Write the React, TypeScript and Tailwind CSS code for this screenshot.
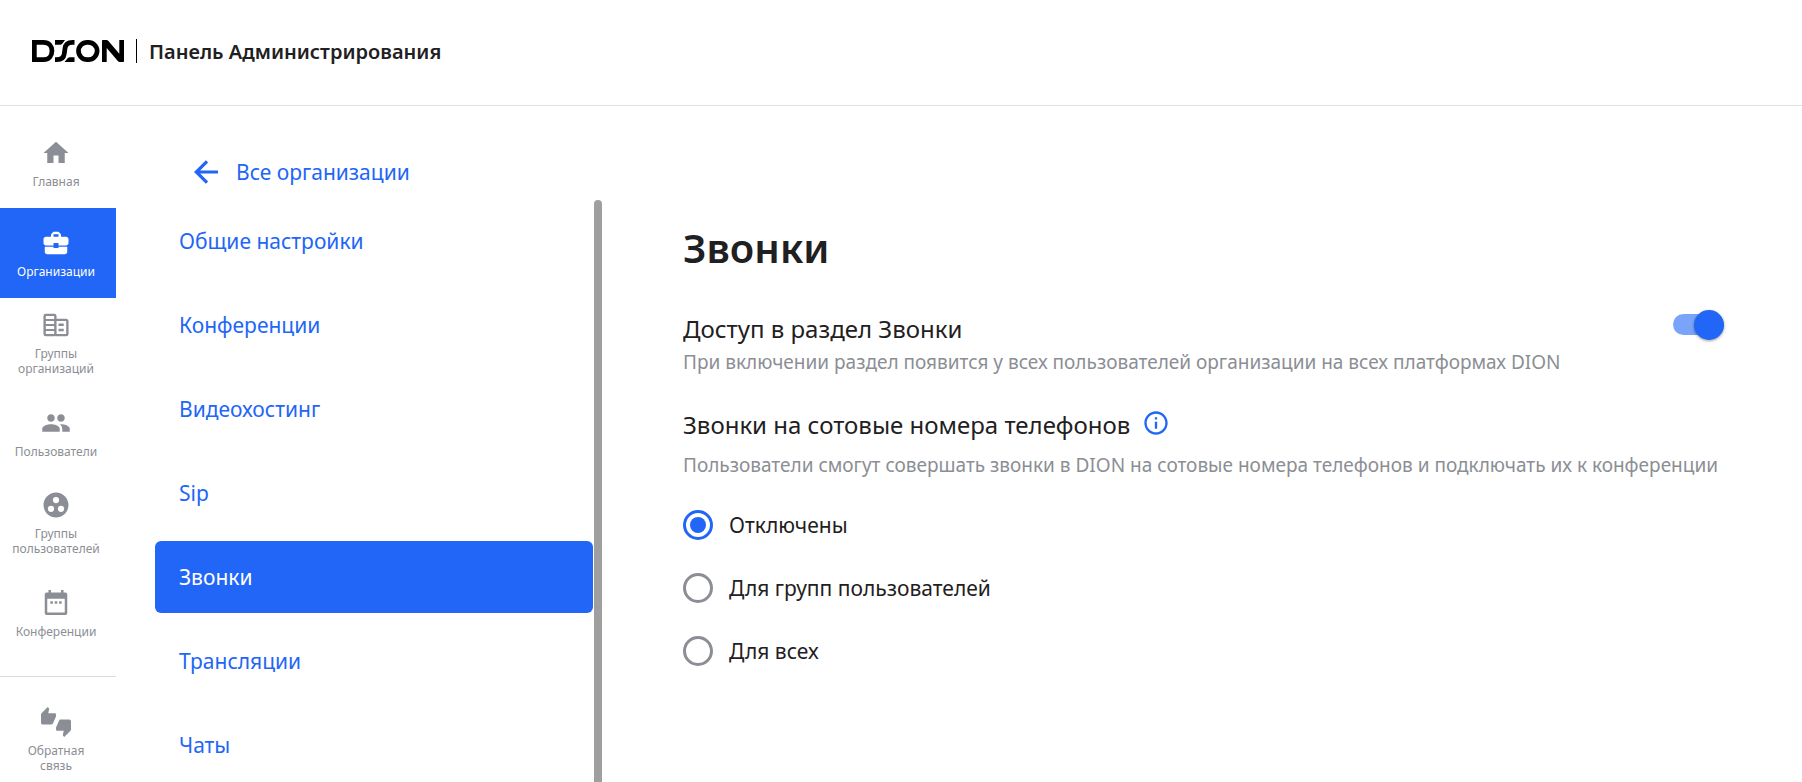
import { useState } from "react";
import type { ComponentType } from "react";
import {
  MdHome,
  MdBusinessCenter,
  MdPeople,
  MdGroupWork,
  MdThumbsUpDown,
  MdInfoOutline,
} from "react-icons/md";

type IconProps = { className?: string };

function OfficeIcon({ className }: IconProps) {
  return (
    <svg viewBox="0 0 24 24" fill="none" stroke="currentColor" className={className}>
      <rect x="2.900" y="3.900" width="8.600" height="16.200" rx="1" strokeWidth="1.900" />
      <path d="M3 8h8.500M3 12h8.500M3 16h8.500" strokeWidth="1.700" />
      <path d="M11.500 7.900h8.600a1 1 0 0 1 1 1v10.200a1 1 0 0 1-1 1h-8.600" strokeWidth="1.900" />
      <path d="M14 11.800h4.200M14 16h4.200" strokeWidth="1.900" />
    </svg>
  );
}

function CalendarIcon({ className }: IconProps) {
  return (
    <svg viewBox="0 0 24 24" fill="currentColor" className={className}>
      <path
        fillRule="evenodd"
        d="M19.500 3.500H18v-2h-2v2H8v-2H6v2H4.500A1.500 1.500 0 0 0 3 5v15a1.500 1.500 0 0 0 1.500 1.500h15A1.500 1.500 0 0 0 21 20V5a1.500 1.500 0 0 0-1.500-1.500zM19 19.500H5v-11h14z"
      />
      <path d="M7.500 10.500h2v2h-2zm3.500 0h2v2h-2zm3.500 0h2v2h-2z" />
    </svg>
  );
}

function BackIcon({ className }: IconProps) {
  return (
    <svg viewBox="0 0 24 24" fill="none" stroke="currentColor" strokeWidth="3.200" className={className}>
      <path d="M24 12H2.500M13 1.300 2.300 12 13 22.700" />
    </svg>
  );
}

function Logo({ className }: IconProps) {
  return (
    <svg viewBox="0 0 92 22" className={className} role="img" aria-label="DION">
      <g fill="none" stroke="#000" strokeWidth="4.700">
        <path d="M2.350 2.350h9.200c5.400 0 8.400 3.700 8.400 8.650s-3 8.650-8.400 8.650h-9.200z" />
        <path d="M42.500 2.400h-2c-4.500 0-7 1.900-7.500 6l-.7 5.200c-.5 4-2.800 6-7.300 6h-2" />
        <rect x="46.500" y="2.350" width="18.600" height="17.300" rx="8.650" />
      </g>
      <path d="M23 0h10l-2 2.800c-.8 1-1.400 1.900-2.500 1.900H23z" />
      <path d="M42.500 22h-10l2.300-2.800c.9-1.100 1.700-1.900 3-1.900h4.700z" />
      <path d="M70 22V1c0-.6.400-1 1-1h3.500c.7 0 1.300.3 1.700.8l11.100 12.900V0H92v21c0 .6-.4 1-1 1h-3.300c-.7 0-1.300-.3-1.700-.8L74.700 8.100V22z" />
    </svg>
  );
}

const mainNav: { label: string; icon: ComponentType<IconProps> }[] = [
  { label: "Главная", icon: MdHome },
  { label: "Организации", icon: MdBusinessCenter },
  { label: "Группы\nорганизаций", icon: OfficeIcon },
  { label: "Пользователи", icon: MdPeople },
  { label: "Группы\nпользователей", icon: MdGroupWork },
  { label: "Конференции", icon: CalendarIcon },
];

const sections = ["Общие настройки", "Конференции", "Видеохостинг", "Sip", "Звонки", "Трансляции", "Чаты"];

const callModes = ["Отключены", "Для групп пользователей", "Для всех"];

function RailLink({
  label,
  icon: Icon,
  active,
}: {
  label: string;
  icon: ComponentType<IconProps>;
  active?: boolean;
}) {
  return (
    <a
      href="#"
      aria-current={active ? "page" : undefined}
      className={`flex h-[90px] shrink-0 flex-col items-center justify-center gap-1.5 pr-1 text-center text-[12px] leading-[15px] whitespace-pre-line ${
        active ? "bg-[#2166f6] text-white" : "text-[#8b8e94]"
      }`}
    >
      <Icon className="size-[30px]" />
      <span>{label}</span>
    </a>
  );
}

export default function App() {
  const [section, setSection] = useState("Звонки");
  const [enabled, setEnabled] = useState(true);
  const [mode, setMode] = useState(callModes[0]);

  return (
    <div className="flex h-screen flex-col overflow-hidden bg-white font-['Noto_Sans',sans-serif] text-[#1f2022]">
      <header className="flex h-[106px] shrink-0 items-center border-b border-[#e0e0e0] px-8 pb-1">
        <Logo className="h-[22px] w-[92px]" />
        <span className="ml-3 h-6 w-px bg-black" />
        <h1 className="ml-3 pt-0.5 text-[20px] leading-7 font-semibold">Панель Администрирования</h1>
      </header>

      <div className="flex min-h-0 flex-1">
        <nav aria-label="Разделы" className="flex w-[116px] shrink-0 flex-col pt-3">
          {mainNav.map((item) => (
            <RailLink key={item.label} {...item} active={item.label === "Организации"} />
          ))}
          <div className="mt-[18px] border-t border-[#dcdcdc] pt-[18px]">
            <RailLink label={"Обратная\nсвязь"} icon={MdThumbsUpDown} />
          </div>
        </nav>

        <aside className="flex w-[486px] shrink-0 flex-col pl-[39px]">
          <a
            href="#"
            className="mt-[44px] ml-[39px] flex h-[44px] items-center gap-[18px] text-[21px] leading-[44px] text-[#2166f6]"
          >
            <BackIcon className="size-6" />
            Все организации
          </a>
          <div className="mt-1.5 flex min-h-0 flex-1 gap-px">
            <ul className="flex flex-1 flex-col gap-3 pt-[5px]">
              {sections.map((name) => (
                <li key={name}>
                  <button
                    type="button"
                    onClick={() => setSection(name)}
                    className={`h-[72px] w-full rounded-md px-6 pt-0.5 text-left text-[21px] ${
                      name === section ? "bg-[#2166f6] text-white" : "text-[#2166f6]"
                    }`}
                  >
                    {name}
                  </button>
                </li>
              ))}
            </ul>
            <div className="-mb-4 w-2 shrink-0 rounded-full bg-[#9f9f9f]" />
          </div>
        </aside>

        <main className="min-w-0 flex-1 pt-[114px] pr-[78px] pl-[81px]">
          <h2 className="text-[40px] leading-[56px] font-semibold">Звонки</h2>
          <div className="mt-[37px] flex justify-between">
            <div>
              <label htmlFor="calls-access" className="block text-[24px] leading-8">
                Доступ в раздел Звонки
              </label>
              <p className="mt-px text-[19px] leading-8 text-[#8b8e94]">
                При включении раздел появится у всех пользователей организации на всех платформах DION
              </p>
            </div>
            <input
              id="calls-access"
              type="checkbox"
              role="switch"
              checked={enabled}
              onChange={(e) => setEnabled(e.target.checked)}
              className="mt-px flex h-[21px] w-[51px] shrink-0 appearance-none items-center rounded-full bg-[#b5b8bd] before:size-[30px] before:shrink-0 before:rounded-full before:bg-white before:shadow-[0_1px_3px_rgba(0,0,0,0.4)] checked:justify-end checked:bg-[#7aa3fa] checked:before:bg-[#2166f6]"
            />
          </div>

          <fieldset className="mt-[31px]">
            <legend className="flex items-start gap-3 text-[24px] leading-8">
              Звонки на сотовые номера телефонов
              <button type="button" aria-label="Подробнее" className="text-[#2166f6]">
                <MdInfoOutline className="size-7" />
              </button>
            </legend>
            <p className="mt-2 text-[19px] leading-8 text-[#8b8e94]">
              Пользователи смогут совершать звонки в DION на сотовые номера телефонов и подключать их к конференции
            </p>
            <div className="mt-[29px] flex flex-col items-start gap-[33px]">
              {callModes.map((name) => (
                <label key={name} className="flex items-center gap-4 text-[21px] leading-[30px]">
                  <input
                    type="radio"
                    name="call-mode"
                    checked={mode === name}
                    onChange={() => setMode(name)}
                    className="flex size-[30px] appearance-none items-center justify-center rounded-full border-3 border-[#8b8e94] checked:border-[#2166f6] checked:before:size-4 checked:before:rounded-full checked:before:bg-[#2166f6]"
                  />
                  {name}
                </label>
              ))}
            </div>
          </fieldset>
        </main>
      </div>
    </div>
  );
}
